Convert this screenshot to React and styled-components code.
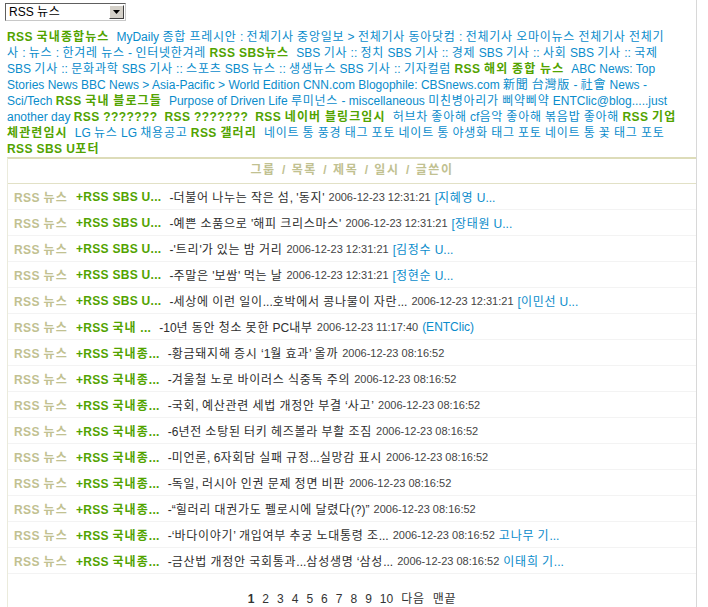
import React from 'react'
import styled, { createGlobalStyle } from 'styled-components'

const GlobalStyle = createGlobalStyle`
  body {
    margin: 0;
    background: #fff;
    font-family: "Liberation Sans", "Noto Sans CJK KR", sans-serif;
    font-size: 12px;
    color: #333;
  }
`

const blue = '#0a8ccb'
const green = '#52a300'
const olive = '#c1c191'

// Gulim sets hangul a little looser than Noto does, so hangul runs get their own spacing
const hangul = /([\u1100-\u11ff\u3130-\u318f\uac00-\ud7a3\u3400-\u9fff]+)/
const K = ({ children }) =>
  children.split(hangul).map((part, i) => (i % 2 ? <Ko key={i}>{part}</Ko> : part))

const lines = [
  [['c', 'RSS 국내종합뉴스'], ['f', 'MyDaily 종합 프레시안 : 전체기사 중앙일보 > 전체기사 동아닷컴 : 전체기사 오마이뉴스 전체기사 전체기']],
  [['f', '사 : 뉴스 : 한겨레 뉴스 - 인터넷한겨레'], ['c', 'RSS SBS뉴스'], ['f', 'SBS 기사 :: 정치 SBS 기사 :: 경제 SBS 기사 :: 사회 SBS 기사 :: 국제']],
  [['f', 'SBS 기사 :: 문화과학 SBS 기사 :: 스포츠 SBS 뉴스 :: 생생뉴스 SBS 기사 :: 기자컬럼'], ['c', 'RSS 해외 종합 뉴스'], ['f', 'ABC News: Top']],
  [['f', 'Stories News BBC News > Asia-Pacific > World Edition CNN.com Blogophile: CBSnews.com 新聞 台灣版 - 社會 News -']],
  [['f', 'Sci/Tech'], ['c', 'RSS 국내 블로그들'], ['f', 'Purpose of Driven Life 루미넌스 - miscellaneous 미친병아리가 삐약삐약 ENTClic@blog.....just']],
  [['f', 'another day'], ['c', 'RSS ???????'], ['c', 'RSS ???????'], ['c', 'RSS 네이버 블링크임시'], ['f', '허브차 좋아해 cf음악 좋아해 볶음밥 좋아해'], ['c', 'RSS 기업']],
  [['c', '체관련임시'], ['f', 'LG 뉴스 LG 채용공고'], ['c', 'RSS 갤러리'], ['f', '네이트 통 풍경 태그 포토 네이트 통 야생화 태그 포토 네이트 통 꽃 태그 포토']],
  [['c', 'RSS SBS U포터']],
]

const posts = [
  { feed: '+RSS SBS U...', title: "-더불어 나누는 작은 섬, '동지'", date: '2006-12-23 12:31:21', by: '[지혜영 U...' },
  { feed: '+RSS SBS U...', title: "-예쁜 소품으로 '해피 크리스마스'", date: '2006-12-23 12:31:21', by: '[장태원 U...' },
  { feed: '+RSS SBS U...', title: "-'트리'가 있는 밤 거리", date: '2006-12-23 12:31:21', by: '[김정수 U...' },
  { feed: '+RSS SBS U...', title: "-주말은 '보쌈' 먹는 날", date: '2006-12-23 12:31:21', by: '[정현순 U...' },
  { feed: '+RSS SBS U...', title: '-세상에 이런 일이...호박에서 콩나물이 자란...', date: '2006-12-23 12:31:21', by: '[이민선 U...' },
  { feed: '+RSS 국내 ...', title: '-10년 동안 청소 못한 PC내부', date: '2006-12-23 11:17:40', by: '(ENTClic)' },
  { feed: '+RSS 국내종...', title: '-황금돼지해 증시 ‘1월 효과’ 올까', date: '2006-12-23 08:16:52' },
  { feed: '+RSS 국내종...', title: '-겨울철 노로 바이러스 식중독 주의', date: '2006-12-23 08:16:52' },
  { feed: '+RSS 국내종...', title: '-국회, 예산관련 세법 개정안 부결 ‘사고’', date: '2006-12-23 08:16:52' },
  { feed: '+RSS 국내종...', title: '-6년전 소탕된 터키 헤즈볼라 부활 조짐', date: '2006-12-23 08:16:52' },
  { feed: '+RSS 국내종...', title: '-미언론, 6자회담 실패 규정...실망감 표시', date: '2006-12-23 08:16:52' },
  { feed: '+RSS 국내종...', title: '-독일, 러시아 인권 문제 정면 비판', date: '2006-12-23 08:16:52' },
  { feed: '+RSS 국내종...', title: '-“힐러리 대권가도 펠로시에 달렸다(?)”', date: '2006-12-23 08:16:52' },
  { feed: '+RSS 국내종...', title: '-‘바다이야기’ 개입여부 추궁 노대통령 조...', date: '2006-12-23 08:16:52', by: '고나무 기...' },
  { feed: '+RSS 국내종...', title: '-금산법 개정안 국회통과...삼성생명 ‘삼성...', date: '2006-12-23 08:16:52', by: '이태희 기...' },
]

const pages = ['1', '2', '3', '4', '5', '6', '7', '8', '9', '10', '다음', '맨끝']

export default function App() {
  return (
    <>
      <GlobalStyle />
      <Page>
        <Picker>
          <PickerText><K>RSS 뉴스</K></PickerText>
          <PickerArrow>
            <svg width="7" height="4" viewBox="0 0 7 4"><path d="M0 0h7L3.5 4z" fill="#000" /></svg>
          </PickerArrow>
        </Picker>

        <Feeds>
          {lines.map((line, i) => (
            <FeedLine key={i}>
              {line.map(([kind, text], j) =>
                kind === 'c'
                  ? <Category key={j}><K>{text}</K></Category>
                  : <FeedLink key={j}><K>{text}</K> </FeedLink>
              )}
            </FeedLine>
          ))}
        </Feeds>

        <Board>
          <BoardHead><K>그룹 / 목록 / 제목 / 일시 / 글쓴이</K></BoardHead>
          {posts.map((p, i) => (
            <PostRow key={i}>
              <Group><K>RSS 뉴스</K></Group>
              <Feed><K>{p.feed}</K></Feed>
              <Title><K>{p.title}</K></Title>
              <Stamp>{p.date}</Stamp>
              {p.by && <Author><K>{p.by}</K></Author>}
            </PostRow>
          ))}
          <Pager>
            {pages.map(n => <PageNum key={n} $current={n === '1'}><K>{n}</K></PageNum>)}
          </Pager>
        </Board>
      </Page>
    </>
  )
}

const Ko = styled.span`
  letter-spacing: var(--ko, 0.75px);
`

const Page = styled.div`
  width: 697px;
  min-height: 100vh;
  box-sizing: border-box;
  border-right: 1px solid #d8d8d8;
  padding-top: 3px;
`

const Picker = styled.div`
  margin-left: 5px;
  width: 121px;
  height: 18px;
  box-sizing: border-box;
  border: 1px solid #5e5e5e;
  border-right-color: #c8c8c8;
  border-bottom-color: #c8c8c8;
  display: flex;
  align-items: stretch;
  background: #fff;
`

const PickerText = styled.span`
  flex: 1;
  padding-left: 3px;
  line-height: 16px;
  color: #000;
`

const PickerArrow = styled.span`
  width: 15px;
  margin: 1px;
  box-sizing: border-box;
  background: #d4d0c8;
  border: 1px solid;
  border-color: #fff #404040 #404040 #fff;
  display: flex;
  align-items: center;
  justify-content: center;
`

const Feeds = styled.div`
  margin-top: 8px;
  padding-left: 7px;
  line-height: 16px;
`

const FeedLine = styled.div`
  white-space: nowrap;
`

const Category = styled.b`
  color: ${green};
  margin-right: 7px;
  letter-spacing: 0.4px;
  --ko: 1.1px;
`

const FeedLink = styled.span`
  color: ${blue};
`

const Board = styled.div`
  margin-left: 7px;
  border-top: 2px solid #dddcb9;
  border-left: 1px solid #ebebdc;
`

const BoardHead = styled.div`
  height: 24px;
  line-height: 23px;
  text-align: center;
  font-weight: bold;
  color: ${olive};
  word-spacing: 3px;
  --ko: 1.6px;
  border-bottom: 1px solid #e2e1c6;
`

const PostRow = styled.div`
  height: 25px;
  display: flex;
  align-items: center;
  padding-left: 6px;
  white-space: nowrap;
  border-bottom: 1px solid #f3f3f3;
`

const Group = styled.b`
  color: ${olive};
  margin-right: 8px;
  letter-spacing: 0.4px;
  --ko: 1.1px;
`

const Feed = styled.b`
  color: ${green};
  margin-right: 8px;
  letter-spacing: 0.3px;
  --ko: 1.1px;
`

const Title = styled.span`
  color: #2e2e2e;
  margin-right: 4px;
`

const Stamp = styled.span`
  font-size: 11px;
  color: #444;
  margin-right: 4px;
`

const Author = styled.span`
  color: ${blue};
`

const Pager = styled.div`
  padding-top: 17px;
  text-align: center;
  line-height: 16px;
`

const PageNum = styled.span`
  margin: 0 4px;
  color: #333;
  font-weight: ${p => (p.$current ? 'bold' : 'normal')};
`
